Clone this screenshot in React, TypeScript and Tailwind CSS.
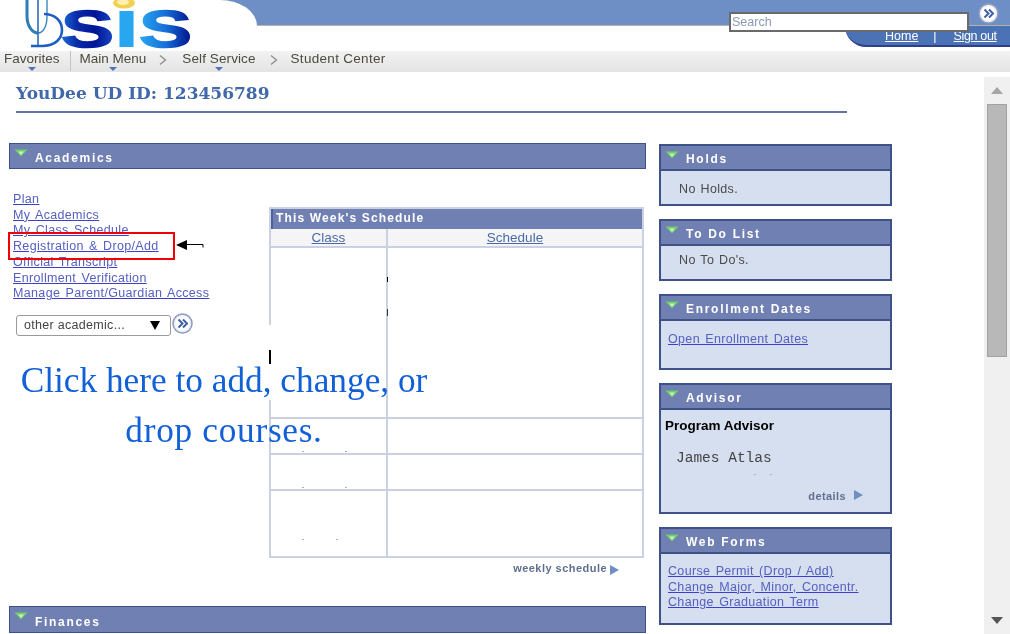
import React from "react";

const sans = { fontFamily: '"Liberation Sans", Arial, sans-serif' };

function GoButton({ size = 21 }: { size?: number }) {
  return (
    <svg width={size} height={size} viewBox="0 0 21 21" className="shrink-0">
      <circle cx="10.5" cy="10.5" r="9.5" fill="#eef1f8" stroke="#8f9cc0" strokeWidth="1.6" />
      <circle cx="10.5" cy="10.5" r="7" fill="#ffffff" />
      <path d="M6.5 6.5l4 4-4 4M11 6.5l4 4-4 4" fill="none" stroke="#3c5fa8" strokeWidth="2" />
    </svg>
  );
}

function Caret() {
  return (
    <svg width="14" height="8" viewBox="0 0 14 8" className="shrink-0">
      <path d="M0.5 0.5h13L7 7.5z" fill="#6fcf68" />
      <path d="M4 2.5h6L7 6z" fill="#c9f0c4" />
    </svg>
  );
}

function PanelHead({ title, className, textClass = "pt-[7px]" }: { title: string; className: string; textClass?: string }) {
  return (
    <div className={`flex items-start bg-[#7180b3] border-[#3f5288] ${className}`}>
      <div className="pl-[4px] pt-[5px]"><Caret /></div>
      <span className={`pl-[7px] text-[12px] leading-[14px] font-bold tracking-[1.7px] text-white ${textClass}`}>{title}</span>
    </div>
  );
}

function Panel({ title, h, children }: { title: string; h: string; children: React.ReactNode }) {
  return (
    <div className={`flex flex-col border-2 border-[#3f5288] bg-[#d6dfef] ${h}`}>
      <PanelHead title={title} className="h-[25px] border-b-2" textClass="pt-[6px]" />
      <div className="flex-1 min-h-0">{children}</div>
    </div>
  );
}

function A({ children }: { children: React.ReactNode }) {
  return <a className="block w-fit text-[12.5px] leading-[15.7px] tracking-[0.34px] [word-spacing:1.5px] text-[#5560c0] underline decoration-[#3a3fd0]">{children}</a>;
}

function NavItem({ label, caret, className = "" }: { label: string; caret?: boolean; className?: string }) {
  return (
    <div className={`relative text-[13.5px] leading-[16px] text-[#4b4a3c] ${className}`}>
      {label}
      {caret && <span className="absolute left-1/2 -ml-[4px] top-[16px] w-0 h-0 border-x-[4px] border-x-transparent border-t-[4px] border-t-[#4f74b8]" />}
    </div>
  );
}

function Chevron({ className }: { className: string }) {
  return (
    <svg width="8" height="10" viewBox="0 0 8 10" className={`shrink-0 mt-[4px] ${className}`}>
      <path d="M1 0.5l5.5 4.5L1 9.5" fill="none" stroke="#8c8c8c" strokeWidth="1.3" />
    </svg>
  );
}

function Logo() {
  return (
    <svg width="200" height="50" viewBox="0 0 200 50" className="absolute left-0 top-0">
      <defs>
        <linearGradient id="s1" x1="0" x2="1" y1="0" y2="0">
          <stop offset="0" stopColor="#1b6fd8" />
          <stop offset="0.3" stopColor="#0a2aa8" />
          <stop offset="0.65" stopColor="#001496" />
          <stop offset="1" stopColor="#1a49c4" />
        </linearGradient>
        <linearGradient id="s2" x1="0" x2="1" y1="0" y2="0">
          <stop offset="0" stopColor="#2aa8f2" />
          <stop offset="0.5" stopColor="#1670d8" />
          <stop offset="1" stopColor="#000f8a" />
        </linearGradient>
      </defs>
      <path d="M27 0V16C27 27 33 33 38 33" fill="none" stroke="#2f7db5" strokeWidth="3" />
      <path d="M47 0V16C47 27 43 33 38 33" fill="none" stroke="#3a86c0" strokeWidth="1.4" />
      <path d="M38 0V46" fill="none" stroke="#2a6fb8" strokeWidth="1.6" />
      <path d="M31 46H42C56 46 62 38 62 30C62 20 54 14 44 14" fill="none" stroke="#1f5fc4" strokeWidth="2.6" />
      <text x="61" y="46.5" fontFamily="Liberation Sans" fontWeight="700" fontSize="51" textLength="53" lengthAdjust="spacingAndGlyphs" fill="url(#s1)" stroke="url(#s1)" strokeWidth="1.5">S</text>
      <text x="113" y="46.5" fontFamily="Liberation Sans" fontWeight="700" fontSize="51" textLength="27" lengthAdjust="spacingAndGlyphs" fill="#29a6f0">I</text>
      <text x="139" y="46.5" fontFamily="Liberation Sans" fontWeight="700" fontSize="51" textLength="53" lengthAdjust="spacingAndGlyphs" fill="url(#s2)" stroke="url(#s2)" strokeWidth="1.5">S</text>
      <ellipse cx="124" cy="3" rx="11" ry="5.5" fill="#f3cf55" />
      <ellipse cx="123" cy="2" rx="6" ry="3" fill="#fff0b0" />
    </svg>
  );
}

const specks = [
  [302, 451], [345, 451], [302, 487], [345, 487], [302, 539], [336, 539], [754, 474], [770, 474],
];

export default function App() {
  return (
    <div style={sans} className="relative w-[1010px] h-[634px] overflow-hidden bg-white blur-[0.35px]">
      {/* header */}
      <header className="relative h-[51px]">
        <div className="flex h-[26px] bg-[#6d8fc6] border-b border-[#b9b3a6]">
          <div className="w-[257px] h-[26px] bg-white rounded-tr-[37px_26px]" />
        </div>
        <div className="flex justify-end">
          <div className="flex w-[165px] h-[21px] bg-[#4a72b5] border-b-2 border-[#2f3f8c] rounded-bl-[22px] pt-[1px] text-[12.5px] leading-[18px] text-white">
            <a className="ml-[40px] underline font-medium">Home</a>
            <span className="ml-[15px] mr-[17px]">|</span>
            <a className="underline font-medium tracking-[-0.35px]">Sign out</a>
          </div>
        </div>
        <Logo />
        <input
          readOnly
          placeholder="Search"
          className="absolute left-[729px] top-[12px] w-[240px] h-[20px] border-2 border-[#6a6a6a] bg-white px-[1px] text-[12.5px] placeholder:text-[#8a9cb4]"
        />
        <div className="absolute left-[978px] top-[3px]"><GoButton /></div>
      </header>

      {/* breadcrumb */}
      <nav className="flex items-start h-[21px] bg-gradient-to-b from-[#f2f2f2] to-[#e4e4e4]">
        <NavItem label="Favorites" caret className="ml-[4px] mr-[10px]" />
        <div className="w-px h-[20px] bg-[#c4c4c4]" />
        <NavItem label="Main Menu" caret className="ml-[9px]" />
        <Chevron className="ml-[13px]" />
        <NavItem label="Self Service" caret className="ml-[15px] tracking-[0.1px]" />
        <Chevron className="ml-[14px]" />
        <NavItem label="Student Center" className="ml-[13px] tracking-[0.3px]" />
      </nav>

      {/* body */}
      <div className="flex h-[562px]">
        <main className="flex flex-col w-[984px]">
          <div className="pl-[16px] pt-[9px] h-[39px]">
            <h1 style={{ fontFamily: '"DejaVu Serif", serif' }} className="text-[17px] leading-[24px] font-bold text-[#4168a8]">YouDee UD ID: 123456789</h1>
          </div>
          <div className="ml-[16px] w-[831px] h-[2px] bg-[#6272a6]" />

          <div className="flex pl-[9px] pt-[30px]">
            {/* left column */}
            <section className="w-[637px]">
              <PanelHead title="Academics" className="h-[26px] border" />
              <div className="flex">
                <div className="w-[260px] pl-[4px] pt-[23px]">
                  <A>Plan</A>
                  <A>My Academics</A>
                  <A>My Class Schedule</A>
                  <A>Registration &amp; Drop/Add</A>
                  <A>Official Transcript</A>
                  <A>Enrollment Verification</A>
                  <A>Manage Parent/Guardian Access</A>
                  <div className="flex items-center mt-[13px] ml-[3px]">
                    <div className="flex items-center justify-between w-[155px] h-[21px] pl-[7px] pr-[10px] border border-[#9a9a9a] rounded-[3px] bg-white text-[12.5px] tracking-[0.3px] text-[#444]">
                      <span>other academic...</span>
                      <span className="w-0 h-0 border-x-[5px] border-x-transparent border-t-[9px] border-t-black" />
                    </div>
                    <div className="ml-[1px] -mt-[4px]"><GoButton /></div>
                  </div>
                </div>

                <div className="w-[377px] pt-[38px]">
                  <div className="w-[375px] border-2 border-[#c9d1e2]">
                    <div className="h-[20px] bg-[#7180b3] pl-[3px] text-[12px] leading-[19px] font-bold tracking-[1.15px] text-white border-l-2 border-[#4f6199]">This Week's Schedule</div>
                    <div className="flex h-[19px] bg-[#f5f5f5] border-b-2 border-[#c9d1e2] text-[13.5px] leading-[18px] text-[#4a6aa8] underline text-center">
                      <div className="w-[117px] border-r-2 border-[#c9d1e2]">Class</div>
                      <div className="flex-1">Schedule</div>
                    </div>
                    {[171, 36, 36, 65].map((h, i) => (
                      <div key={i} style={{ height: h }} className={`flex ${i < 3 ? "border-b-2" : ""} border-[#c9d1e2]`}>
                        <div className="w-[117px] border-r-2 border-[#c9d1e2]" />
                        <div className="flex-1" />
                      </div>
                    ))}
                  </div>
                  <div className="flex items-center justify-end pr-[27px] pt-[3px] h-[18px] text-[11px] font-bold tracking-[0.47px] text-[#5f6f8f]">
                    weekly schedule
                    <span className="ml-[3px] mt-[2px] w-0 h-0 border-y-[5px] border-y-transparent border-l-[9px] border-l-[#6f8fc0]" />
                  </div>
                </div>
              </div>
              <div className="mt-[30px]">
                <PanelHead title="Finances" className="h-[27px] border" textClass="pt-[8px]" />
              </div>
            </section>

            {/* right column */}
            <aside className="ml-[13px] w-[233px] pt-[1px] flex flex-col gap-[13px] text-[12.5px]">
              <Panel title="Holds" h="h-[62px]">
                <p className="pl-[18px] pt-[11px] text-[12.5px] leading-[15px] tracking-[0.35px] [word-spacing:1px] text-[#4a4a4a]">No Holds.</p>
              </Panel>
              <Panel title="To Do List" h="h-[62px]">
                <p className="pl-[18px] pt-[7px] text-[12.5px] leading-[15px] tracking-[0.35px] [word-spacing:1px] text-[#4a4a4a]">No To Do's.</p>
              </Panel>
              <Panel title="Enrollment Dates" h="h-[76px]">
                <div className="pl-[7px] pt-[11px]"><A>Open Enrollment Dates</A></div>
              </Panel>
              <Panel title="Advisor" h="h-[131px]">
                <div className="pl-[4px] pt-[8px] text-[13.5px] leading-[15px] font-bold text-black">Program Advisor</div>
                <div style={{ fontFamily: '"Liberation Mono", monospace' }} className="pl-[15px] pt-[17px] text-[14.5px] leading-[17px] text-[#444]">James Atlas</div>
                <div className="flex items-center justify-end pr-[27px] pt-[22px] text-[11px] leading-[14px] font-bold tracking-[0.4px] text-[#5f6f8f]">
                  details
                  <span className="ml-[8px] -mt-[3px] w-0 h-0 border-y-[5px] border-y-transparent border-l-[9px] border-l-[#6f8fc0]" />
                </div>
              </Panel>
              <Panel title="Web Forms" h="h-[98px]">
                <div className="pl-[7px] pt-[10px]">
                  <A>Course Permit (Drop / Add)</A>
                  <A>Change Major, Minor, Concentr.</A>
                  <A>Change Graduation Term</A>
                </div>
              </Panel>
            </aside>
          </div>
        </main>

        {/* scrollbar */}
        <div className="mt-[5px] w-[26px] bg-[#f0f0f0] flex flex-col items-center">
          <span className="mt-[10px] w-0 h-0 border-x-[6px] border-x-transparent border-b-[7px] border-b-[#a6a6a6]" />
          <div className="mt-[10px] w-[20px] h-[253px] bg-[#b8b8b8] border border-[#a2a2a2]" />
          <span className="mt-[260px] w-0 h-0 border-x-[6px] border-x-transparent border-t-[7px] border-t-[#555]" />
        </div>
      </div>

      {/* annotations over the page */}
      <div className="absolute left-[8px] top-[232px] w-[167px] h-[28px] border-2 border-[#f00000]" />
      <svg width="30" height="14" viewBox="0 0 30 14" className="absolute left-[175px] top-[238px]">
        <path d="M1 7l11-5v10z" fill="#000" />
        <path d="M10 6.5h18v3" fill="none" stroke="#000" strokeWidth="1" />
      </svg>
      <div className="absolute left-[269px] top-[325px] w-[3px] h-[75px] bg-white" />
      <div className="absolute left-[269px] top-[350px] w-[2px] h-[14px] bg-black" />
      <div className="absolute left-[387px] top-[277px] w-px h-[5px] bg-black" />
      <div className="absolute left-[387px] top-[309px] w-px h-[7px] bg-[#333]" />
      {specks.map(([x, y]) => (
        <div key={`${x}-${y}`} style={{ left: x, top: y }} className="absolute w-[2px] h-px bg-[#b0b0b0]" />
      ))}
      <div style={{ fontFamily: '"Liberation Serif", serif' }} className="absolute left-[20px] top-[356px] w-[408px] text-center text-[35.3px] leading-[50px] font-normal text-[#1160d8]">
        <div className="whitespace-nowrap">Click here to add, change, or</div>
        <div className="whitespace-nowrap tracking-[0.7px]">drop courses.</div>
      </div>
    </div>
  );
}
